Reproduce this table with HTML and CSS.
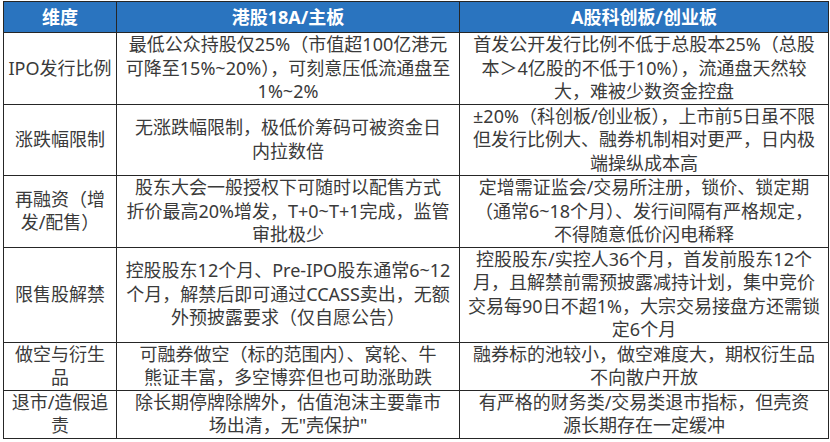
FILE: index.html
```html
<!DOCTYPE html>
<html lang="zh-CN">
<head>
<meta charset="utf-8">
<title>港股与A股制度对比</title>
<link rel="stylesheet" href="styles.css">
</head>
<body>
<div class="wrap">
<table class="cmp">
  <colgroup>
    <col class="c1">
    <col class="c2">
    <col class="c3">
  </colgroup>
  <thead>
    <tr class="head">
      <th>维度</th>
      <th>港股18A/主板</th>
      <th>A股科创板/创业板</th>
    </tr>
  </thead>
  <tbody>
    <tr class="r3">
      <td class="dim">IPO发行比例</td>
      <td>最低公众持股仅25%（市值超100亿港元<br>可降至15%~20%），可刻意压低流通盘至<br>1%~2%</td>
      <td>首发公开发行比例不低于总股本25%（总股<br>本＞4亿股的不低于10%），流通盘天然较<br>大，难被少数资金控盘</td>
    </tr>
    <tr class="r3">
      <td class="dim">涨跌幅限制</td>
      <td>无涨跌幅限制，极低价筹码可被资金日<br>内拉数倍</td>
      <td>±20%（科创板/创业板），上市前5日虽不限<br>但发行比例大、融券机制相对更严，日内极<br>端操纵成本高</td>
    </tr>
    <tr class="r3">
      <td class="dim">再融资（增<br>发/配售）</td>
      <td>股东大会一般授权下可随时以配售方式<br>折价最高20%增发，T+0~T+1完成，监管<br>审批极少</td>
      <td>定增需证监会/交易所注册，锁价、锁定期<br>（通常6~18个月）、发行间隔有严格规定，<br>不得随意低价闪电稀释</td>
    </tr>
    <tr class="r4">
      <td class="dim">限售股解禁</td>
      <td>控股股东12个月、Pre-IPO股东通常6~12<br>个月，解禁后即可通过CCASS卖出，无额<br>外预披露要求（仅自愿公告）</td>
      <td>控股股东/实控人36个月，首发前股东12个<br>月，且解禁前需预披露减持计划，集中竞价<br>交易每90日不超1%，大宗交易接盘方还需锁<br>定6个月</td>
    </tr>
    <tr class="r2">
      <td class="dim">做空与衍生<br>品</td>
      <td>可融券做空（标的范围内）、窝轮、牛<br>熊证丰富，多空博弈但也可助涨助跌</td>
      <td>融券标的池较小，做空难度大，期权衍生品<br>不向散户开放</td>
    </tr>
    <tr class="r2">
      <td class="dim">退市/造假追<br>责</td>
      <td>除长期停牌除牌外，估值泡沫主要靠市<br>场出清，无"壳保护"</td>
      <td>有严格的财务类/交易类退市指标，但壳资<br>源长期存在一定缓冲</td>
    </tr>
  </tbody>
</table>
</div>
</body>
</html>
```
FILE: styles.css
```css
html, body {
  margin: 0;
  padding: 0;
  background: #ffffff;
}

.wrap {
  padding: 1px 2px 0 3px;
}

.cmp {
  border-collapse: collapse;
  table-layout: fixed;
  width: 825px;
  font-family: "Noto Sans", "Noto Sans CJK SC", sans-serif;
  font-size: 18px;
  color: #3a3a3a;
}

.c1 { width: 113px; }
.c2 { width: 343px; }
.c3 { width: 369px; }

.cmp th,
.cmp td {
  border: 1px solid #262626;
  padding: 0 4px;
  text-align: center;
  vertical-align: middle;
  white-space: nowrap;
  line-height: 23.5px;
}

.head th {
  background: #2a74bf;
  color: #ffffff;
  font-weight: 700;
  height: 30px;
  line-height: 30px;
}

.r3 td { height: 70px; }
.r4 td { height: 94px; }
.r2 td { height: 46px; }
```
